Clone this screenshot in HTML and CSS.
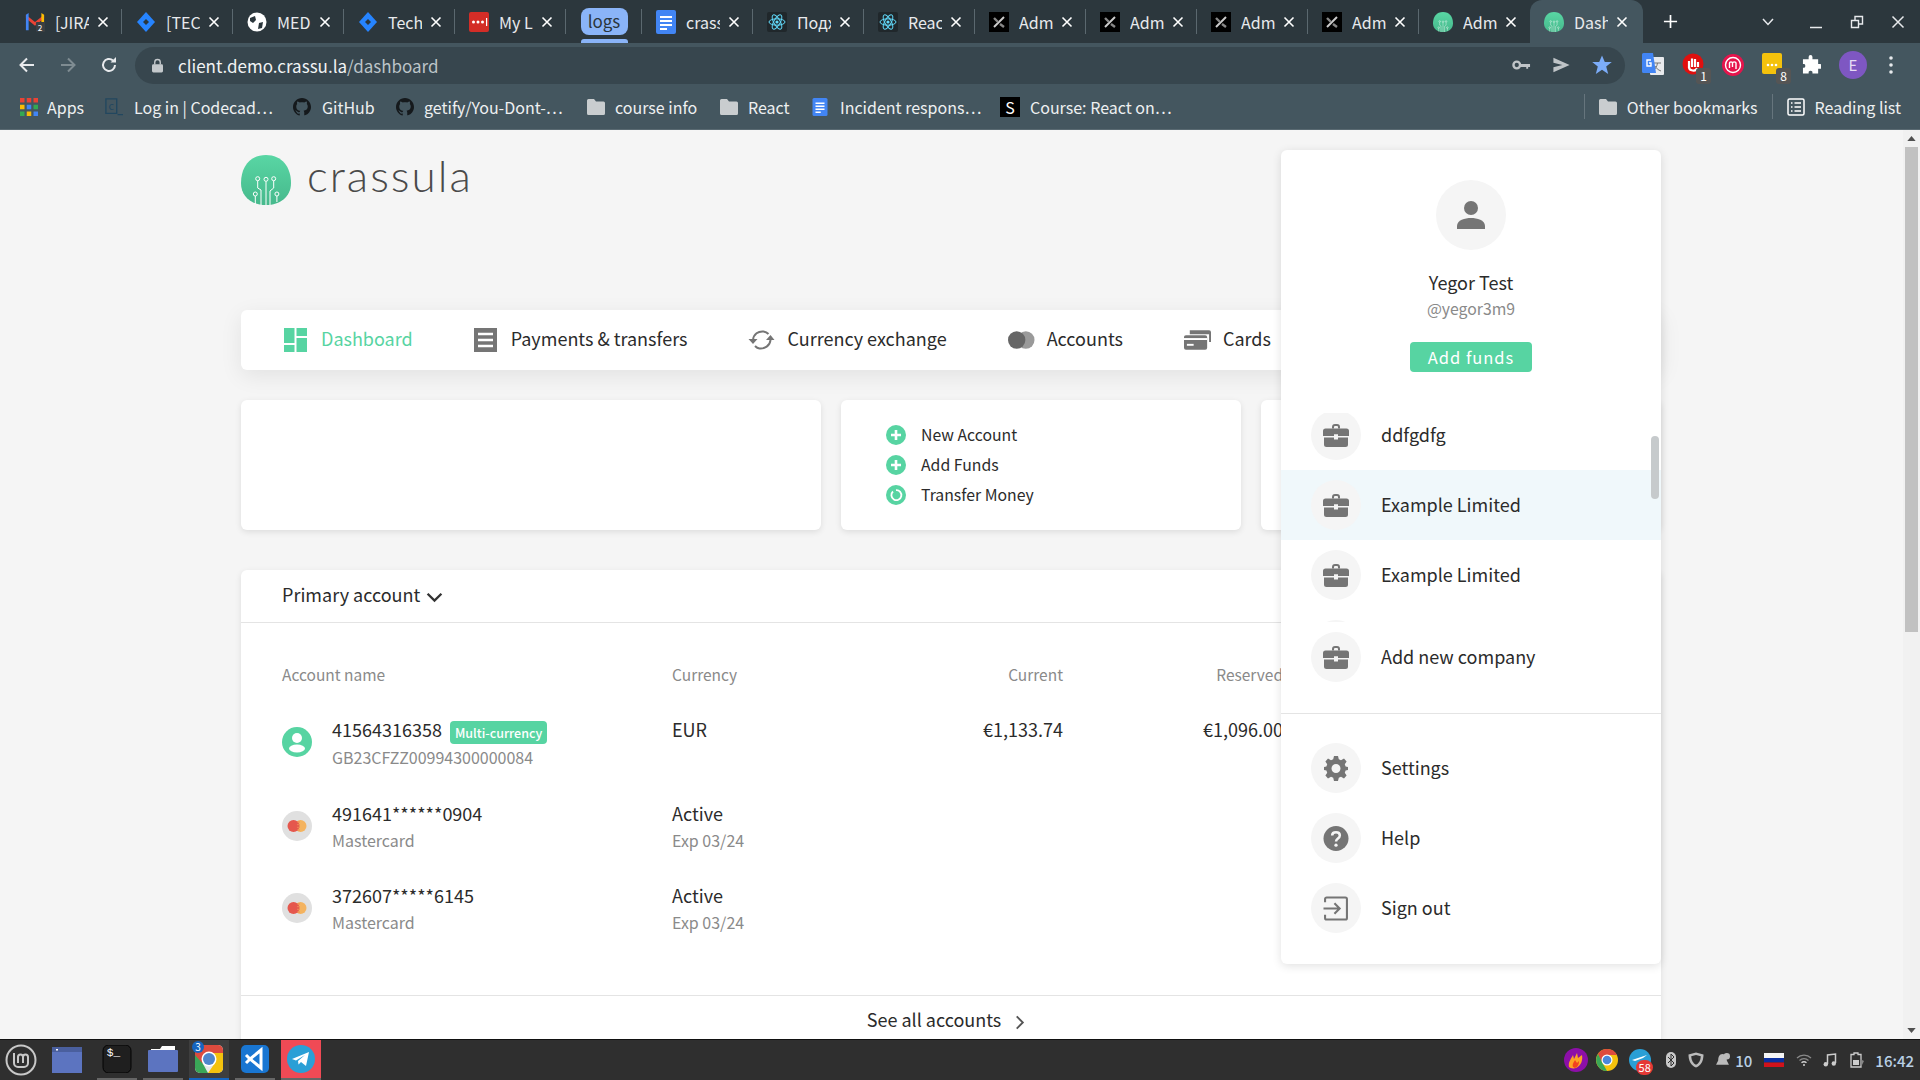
FILE: index.html
```html
<!DOCTYPE html>
<html lang="en">
<head>
  <meta charset="UTF-8">
  <title>Dashboard</title>
  <link rel="stylesheet" href="styles.css">
</head>
<body>
  <svg class="defs" width="0" height="0">
    <defs>
      <linearGradient id="leaf" x1="0" y1="0" x2="0" y2="1">
        <stop offset="0" stop-color="#59d6a4"/>
        <stop offset="1" stop-color="#46b98c"/>
      </linearGradient>
      <symbol id="i-logo" viewBox="0 0 50 50">
        <path d="M25 0C41 0 50 12 50 28C50 42 39 50 25 50C11 50 0 42 0 28C0 12 9 0 25 0Z" fill="url(#leaf)"/>
        <g fill="none" stroke="#fff" stroke-width="1">
          <circle cx="16.7" cy="23.7" r="2"/><circle cx="25" cy="24.3" r="2"/><circle cx="32.7" cy="23.7" r="2"/>
          <circle cx="14.3" cy="39" r="2"/><circle cx="35.9" cy="39" r="2"/>
          <path d="M16.7 26V33L20 35V50M25 26.5V50M32.7 26V33L29 36V50M14.3 41V49M35.9 41V47"/>
        </g>
      </symbol>
      <symbol id="i-close" viewBox="0 0 12 12">
        <path d="M1.5 1.5L10.5 10.5M10.5 1.5L1.5 10.5" stroke="#fff" stroke-width="1.6" fill="none"/>
      </symbol>
      <symbol id="i-jira" viewBox="0 0 20 20">
        <path d="M10 0L19 10L10 20L1 10Z" fill="#2684ff"/>
        <path d="M10 7L13 10L10 13L7 10Z" fill="#2b363c"/>
      </symbol>
      <symbol id="i-doc" viewBox="0 0 20 24">
        <rect width="20" height="24" rx="2" fill="#4285f4"/>
        <path d="M4 7H16M4 11H16M4 15H16M4 19H11" stroke="#fff" stroke-width="2"/>
      </symbol>
      <symbol id="i-react" viewBox="0 0 20 20">
        <rect width="20" height="20" rx="2" fill="#20272b"/>
        <g fill="none" stroke="#61dafb" stroke-width="1">
          <ellipse cx="10" cy="10" rx="8" ry="3.2"/>
          <ellipse cx="10" cy="10" rx="8" ry="3.2" transform="rotate(60 10 10)"/>
          <ellipse cx="10" cy="10" rx="8" ry="3.2" transform="rotate(120 10 10)"/>
        </g>
        <circle cx="10" cy="10" r="1.6" fill="#61dafb"/>
      </symbol>
      <symbol id="i-admin" viewBox="0 0 20 20">
        <rect width="20" height="20" fill="#000"/>
        <path d="M5 15L15 5" stroke="#ccc" stroke-width="2"/>
        <path d="M5 6L9 10M11 12L15 15" stroke="#888" stroke-width="2.4"/>
      </symbol>
      <symbol id="i-github" viewBox="0 0 16 16">
        <path fill="#15191c" d="M8 0C3.6 0 0 3.6 0 8c0 3.5 2.3 6.5 5.5 7.6.4.1.5-.2.5-.4v-1.4c-2.2.5-2.7-1.1-2.7-1.1-.4-.9-.9-1.2-.9-1.2-.7-.5.1-.5.1-.5.8.1 1.2.8 1.2.8.7 1.2 1.9.9 2.3.7.1-.5.3-.9.5-1.1-1.8-.2-3.6-.9-3.6-4 0-.9.3-1.6.8-2.1-.1-.2-.4-1 .1-2.1 0 0 .7-.2 2.2.8.6-.2 1.3-.3 2-.3s1.4.1 2 .3c1.5-1 2.2-.8 2.2-.8.4 1.1.2 1.9.1 2.1.5.6.8 1.3.8 2.1 0 3.1-1.9 3.7-3.7 3.9.3.3.6.8.6 1.5v2.2c0 .2.1.5.6.4C13.7 14.5 16 11.5 16 8c0-4.4-3.6-8-8-8z"/>
      </symbol>
      <symbol id="i-folder" viewBox="0 0 18 16">
        <path fill="#c9cdcf" d="M1.500 0H7L9 2.500H16.500A1.500 1.500 0 0 1 18 4V14.500A1.500 1.500 0 0 1 16.500 16H1.500A1.500 1.500 0 0 1 0 14.500V1.500A1.500 1.500 0 0 1 1.500 0Z"/>
      </symbol>
      <symbol id="i-brief" viewBox="0 0 26 24">
        <path fill="#757575" d="M9 3.500A3 3 0 0 1 12 .5H14A3 3 0 0 1 17 3.500V5H15V3.500A1 1 0 0 0 14 2.500H12A1 1 0 0 0 11 3.500V5H9Z"/>
        <path fill="#757575" d="M2.500 5H23.500A2.500 2.500 0 0 1 26 7.500V12.500H15V10.800H11V12.500H0V7.500A2.500 2.500 0 0 1 2.500 5Z"/>
        <path fill="#757575" d="M1 14H11V16H15V14H25V21A2.500 2.500 0 0 1 22.500 23.500H3.500A2.500 2.500 0 0 1 1 21Z"/>
      </symbol>
      <symbol id="i-card" viewBox="0 0 30 30">
        <circle cx="15" cy="15" r="15" fill="#e0e0e0"/>
        <circle cx="18.500" cy="15" r="6" fill="#f4b35f"/>
        <circle cx="11.500" cy="15" r="6" fill="#e5574d"/>
        <path d="M15 11H18M15 13.700H18M15 16.300H18M15 19H18" stroke="#ee8a55" stroke-width="1"/>
      </symbol>
      <symbol id="i-plus" viewBox="0 0 20 20">
        <circle cx="10" cy="10" r="10" fill="#57d4a2"/>
        <path d="M10 5V15M5 10H15" stroke="#fff" stroke-width="2.600"/>
      </symbol>
    </defs>
  </svg>

  <div class="tabstrip">
    <div class="tab">
      <svg class="fav" viewBox="0 0 20 22"><path fill="#ea4335" d="M0 3L10 11L20 3V7L10 15L0 7Z"/><path fill="#4285f4" d="M0 3L3 1V20H0Z"/><path fill="#fbbc04" d="M17 1L20 3V12H17Z"/><rect x="11" y="11" width="10" height="11" rx="1" fill="#3b3f42"/><text class="fav-count" x="13" y="20.500">2</text></svg>
      <span class="tab-title">[JIRA</span><svg class="tab-x"><use href="#i-close"/></svg>
    </div>
    <div class="tab"><svg class="fav"><use href="#i-jira"/></svg><span class="tab-title">[TECH</span><svg class="tab-x"><use href="#i-close"/></svg></div>
    <div class="tab">
      <svg class="fav" viewBox="0 0 20 20"><circle cx="10" cy="10" r="9.500" fill="#fff"/><path fill="#2b363c" d="M3 6L8 4L9 8L6 11L3 9ZM12 11L16 10L15 16L11 17Z"/></svg>
      <span class="tab-title">MEDIUM</span><svg class="tab-x"><use href="#i-close"/></svg>
    </div>
    <div class="tab"><svg class="fav"><use href="#i-jira"/></svg><span class="tab-title">Tech</span><svg class="tab-x"><use href="#i-close"/></svg></div>
    <div class="tab">
      <svg class="fav" viewBox="0 0 20 20"><rect width="20" height="20" rx="2" fill="#d32d27"/><circle cx="4.500" cy="10" r="1.500" fill="#fff"/><circle cx="9" cy="10" r="1.500" fill="#fff"/><circle cx="13.500" cy="10" r="1.500" fill="#fff"/><rect x="17" y="6" width="1.200" height="8" fill="#fff"/></svg>
      <span class="tab-title">My LastPass</span><svg class="tab-x"><use href="#i-close"/></svg>
    </div>
    <div class="tab-group"><span class="group-chip">logs</span><span class="group-line"></span></div>
    <div class="tab"><svg class="fav fav-doc"><use href="#i-doc"/></svg><span class="tab-title">crassula</span><svg class="tab-x"><use href="#i-close"/></svg></div>
    <div class="tab"><svg class="fav"><use href="#i-react"/></svg><span class="tab-title">Подход</span><svg class="tab-x"><use href="#i-close"/></svg></div>
    <div class="tab"><svg class="fav"><use href="#i-react"/></svg><span class="tab-title">React</span><svg class="tab-x"><use href="#i-close"/></svg></div>
    <div class="tab"><svg class="fav"><use href="#i-admin"/></svg><span class="tab-title">Admin</span><svg class="tab-x"><use href="#i-close"/></svg></div>
    <div class="tab"><svg class="fav"><use href="#i-admin"/></svg><span class="tab-title">Admin</span><svg class="tab-x"><use href="#i-close"/></svg></div>
    <div class="tab"><svg class="fav"><use href="#i-admin"/></svg><span class="tab-title">Admin</span><svg class="tab-x"><use href="#i-close"/></svg></div>
    <div class="tab"><svg class="fav"><use href="#i-admin"/></svg><span class="tab-title">Admin</span><svg class="tab-x"><use href="#i-close"/></svg></div>
    <div class="tab tab-last"><svg class="fav"><use href="#i-logo"/></svg><span class="tab-title">Admin</span><svg class="tab-x"><use href="#i-close"/></svg></div>
    <div class="tab tab-active"><svg class="fav"><use href="#i-logo"/></svg><span class="tab-title">Dashboard</span><svg class="tab-x"><use href="#i-close"/></svg></div>
    <svg class="new-tab" viewBox="0 0 16 16"><path d="M8 1V15M1 8H15" stroke="#fff" stroke-width="1.800"/></svg>
    <div class="win-controls">
      <svg class="win-chevron" viewBox="0 0 12 8"><path d="M1 1L6 6.500L11 1" stroke="#e8eaed" stroke-width="1.500" fill="none"/></svg>
      <svg class="win-btn" viewBox="0 0 14 14"><path d="M1 12.500H13" stroke="#e8eaed" stroke-width="1.500"/></svg>
      <svg class="win-btn" viewBox="0 0 14 14"><path d="M1.500 5.500H8.500V12.500H1.500ZM5 5V1.500H12.500V9H9" stroke="#e8eaed" stroke-width="1.400" fill="none"/></svg>
      <svg class="win-btn" viewBox="0 0 14 14"><path d="M1.500 1.500L12.500 12.500M12.500 1.500L1.500 12.500" stroke="#e8eaed" stroke-width="1.500"/></svg>
    </div>
  </div>

  <div class="toolbar">
    <svg class="nav-btn" viewBox="0 0 18 18"><path d="M16 9H3M9 2.500L2.500 9L9 15.500" stroke="#e8eaed" stroke-width="2" fill="none"/></svg>
    <svg class="nav-btn" viewBox="0 0 18 18"><path d="M2 9H15M9 2.500L15.500 9L9 15.500" stroke="#7f8c92" stroke-width="2" fill="none"/></svg>
    <svg class="nav-btn" viewBox="0 0 18 18"><path d="M15 9A6 6 0 1 1 13 4.500" stroke="#e8eaed" stroke-width="2" fill="none"/><path d="M10.500 6.500H16V1Z" fill="#e8eaed"/></svg>
    <div class="omnibox">
      <svg class="lock" viewBox="0 0 12 16"><path d="M3 7V4.500A3 3 0 0 1 9 4.500V7" stroke="#c4c9cc" stroke-width="1.500" fill="none"/><rect y="6.500" width="12" height="9" rx="1.500" fill="#c4c9cc"/></svg>
      <span class="url">client.demo.crassu.la<span class="url-path">/dashboard</span></span>
      <svg class="omni-key" viewBox="0 0 20 12"><circle cx="5" cy="6" r="3.500" fill="none" stroke="#bfc4c7" stroke-width="2.500"/><path d="M8 5H19V8H17V10H15V8H8Z" fill="#bfc4c7"/></svg>
      <svg class="omni-send" viewBox="0 0 20 20"><path d="M1 2L19 10L1 18L1 12.500L11 10L1 7.500Z" fill="#bfc4c7"/></svg>
      <svg class="omni-star" viewBox="0 0 20 20"><path d="M10 0.500L12.800 7H19.800L14.200 11.500L16.200 19L10 14.800L3.800 19L5.800 11.500L0.200 7H7.200Z" fill="#7cacf8"/></svg>
    </div>
    <div class="extensions">
      <svg class="ext" viewBox="0 0 22 24"><rect x="8" y="4" width="14" height="18" rx="1" fill="#e8eaed"/><path d="M12 10H19M15.500 10C15 14 13 16 11 18M13 13C14 15 16 17 19 18" stroke="#777" stroke-width="1" fill="none"/><path d="M1.500 0H11L14 20H1.500A1.500 1.500 0 0 1 0 18.500V1.500A1.500 1.500 0 0 1 1.500 0Z" fill="#4285f4"/><path d="M9 7H5V13H9V10H7" stroke="#fff" stroke-width="1.400" fill="none"/></svg>
      <div class="ext-badged">
        <svg class="ext" viewBox="0 0 22 24"><circle cx="11" cy="11" r="10.500" fill="#e0100f"/><path d="M7 15V8M10 14V5.500M13 14V6M16 14V9M7 14C7 18 14 19 15 15" stroke="#fff" stroke-width="2.200" fill="none"/></svg>
        <span class="badge">1</span>
      </div>
      <svg class="ext" viewBox="0 0 22 22"><circle cx="11" cy="11" r="11" fill="#e6144c"/><circle cx="11" cy="11" r="7.500" fill="none" stroke="#fff" stroke-width="1.400"/><path d="M7.500 14V9C7.500 7.500 10.500 7.500 10.500 9V13M10.500 9C10.500 7.500 14 7.500 14 9V15" stroke="#fff" stroke-width="1.400" fill="none"/></svg>
      <div class="ext-badged">
        <svg class="ext" viewBox="0 0 22 24"><rect width="20" height="21" rx="2" fill="#f5c20c"/><circle cx="6" cy="12" r="1.300" fill="#fff"/><circle cx="10" cy="12" r="1.300" fill="#fff"/><circle cx="14" cy="12" r="1.300" fill="#fff"/></svg>
        <span class="badge">8</span>
      </div>
      <svg class="ext ext-puzzle" viewBox="0 0 20 20"><path fill="#fff" d="M7 1.500A2 2 0 0 1 11 1.500V4H17V9H19A2.500 2.500 0 0 1 19 14H17V19H11V17A2.500 2.500 0 0 0 7 17V19H1V13H2.500A2.500 2.500 0 0 0 2.500 9H1V4H7Z"/></svg>
      <span class="profile">E</span>
      <svg class="ext-dots" viewBox="0 0 4 18"><circle cx="2" cy="2" r="1.800" fill="#e8eaed"/><circle cx="2" cy="9" r="1.800" fill="#e8eaed"/><circle cx="2" cy="16" r="1.800" fill="#e8eaed"/></svg>
    </div>
  </div>

  <div class="bookmarks">
    <a class="bm bm-apps">
      <svg class="bm-ic" viewBox="0 0 16 16"><g>
        <rect width="4" height="4" fill="#ea4335"/><rect x="6" width="4" height="4" fill="#ea4335"/><rect x="12" width="4" height="4" fill="#ea4335"/>
        <rect y="6" width="4" height="4" fill="#fbbc04"/><rect x="6" y="6" width="4" height="4" fill="#4285f4"/><rect x="12" y="6" width="4" height="4" fill="#34a853"/>
        <rect y="12" width="4" height="4" fill="#34a853"/><rect x="6" y="12" width="4" height="4" fill="#fbbc04"/><rect x="12" y="12" width="4" height="4" fill="#4285f4"/></g></svg>
      Apps</a>
    <a class="bm bm-code">
      <svg class="bm-ic" viewBox="0 0 20 20"><path d="M1 1H13V17H1ZM14 18.500H20" fill="none" stroke="#22475f" stroke-width="1.500"/><text class="bm-c" x="4" y="13">c</text></svg>
      Log in | Codecad…</a>
    <a class="bm bm-git"><svg class="bm-ic"><use href="#i-github"/></svg>GitHub</a>
    <a class="bm bm-getify"><svg class="bm-ic"><use href="#i-github"/></svg>getify/You-Dont-…</a>
    <a class="bm bm-course"><svg class="bm-ic"><use href="#i-folder"/></svg>course info</a>
    <a class="bm bm-react"><svg class="bm-ic"><use href="#i-folder"/></svg>React</a>
    <a class="bm bm-incident"><svg class="bm-ic"><use href="#i-doc"/></svg>Incident respons…</a>
    <a class="bm bm-s"><span class="bm-sico">S</span>Course: React on…</a>
    <div class="bm-right">
      <a class="bm bm-other"><svg class="bm-ic"><use href="#i-folder"/></svg>Other bookmarks</a>
      <a class="bm bm-reading">
        <svg class="bm-ic" viewBox="0 0 18 18"><rect x="1" y="1" width="16" height="16" rx="1.500" fill="none" stroke="#fff" stroke-width="1.500"/><path d="M4 5H5.500M7.500 5H14M4 9H5.500M7.500 9H14M4 13H5.500M7.500 13H14" stroke="#fff" stroke-width="1.500"/></svg>
        Reading list</a>
    </div>
  </div>

  <div class="viewport">
    <div class="page">
      <div class="brand">
        <svg class="brand-mark"><use href="#i-logo"/></svg>
        <span class="brand-name">crassula</span>
      </div>

      <nav class="mainnav card">
        <a class="nav-item nav-item-active">
          <svg class="nav-ic" viewBox="0 0 24 24"><path fill="#57d4a2" d="M0 0H10.500V15H0ZM12.500 0H23V8H12.500ZM0 17H10.500V24H0ZM12.500 10H23V24H12.500Z"/></svg>
          <span class="nav-label">Dashboard</span></a>
        <a class="nav-item">
          <svg class="nav-ic" viewBox="0 0 24 24"><rect width="23" height="24" fill="#757575"/><path d="M4 6H19M4 12H19M4 18H19" stroke="#fff" stroke-width="2.600"/></svg>
          <span class="nav-label">Payments &amp; transfers</span></a>
        <a class="nav-item nav-item-wide">
          <svg class="nav-ic nav-ic-wide" viewBox="0 0 26 24"><g fill="none" stroke="#757575" stroke-width="2"><path d="M4.500 12C5 6 10 3 15 3.500C17 3.800 19 5 20 6"/><path d="M22 12C21.500 18 16 21 11 20.500C9 20.200 7.500 19 6.500 18"/></g><path fill="#757575" d="M0 11H9L4.500 16ZM17.500 12H26L22 7Z"/></svg>
          <span class="nav-label">Currency exchange</span></a>
        <a class="nav-item nav-item-wide">
          <svg class="nav-ic nav-ic-wide" viewBox="0 0 28 20"><circle cx="18.500" cy="10" r="9" fill="#9a9a9a"/><circle cx="9" cy="10" r="9" fill="#666"/></svg>
          <span class="nav-label">Accounts</span></a>
        <a class="nav-item nav-item-wide">
          <svg class="nav-ic nav-ic-wide" viewBox="0 0 28 20"><path fill="#757575" d="M6 0H26A2 2 0 0 1 28 2V12H26V4H6Z"/><rect y="5" width="24" height="15" rx="2" fill="#757575"/><path d="M0 9H24" stroke="#fff" stroke-width="2"/><path d="M3 15H10" stroke="#fff" stroke-width="2"/></svg>
          <span class="nav-label">Cards</span></a>
      </nav>

      <div class="widgets">
        <div class="widget widget-wide card"></div>
        <div class="widget widget-mid card">
          <a class="quick"><svg class="quick-ic"><use href="#i-plus"/></svg>New Account</a>
          <a class="quick"><svg class="quick-ic"><use href="#i-plus"/></svg>Add Funds</a>
          <a class="quick">
            <svg class="quick-ic" viewBox="0 0 20 20"><circle cx="10" cy="10" r="10" fill="#57d4a2"/><path d="M7 6.500A5 5 0 1 0 10 5.200" fill="none" stroke="#fff" stroke-width="1.800"/></svg>
            Transfer Money</a>
        </div>
        <div class="widget widget-rest card"></div>
      </div>

      <section class="accounts card">
        <header class="accounts-head">
          <span class="head-label">Primary account</span>
          <svg class="head-chevron" viewBox="0 0 16 10"><path d="M1.500 1.500L8 8L14.500 1.500" stroke="#333" stroke-width="2.200" fill="none"/></svg>
        </header>
        <div class="acc-table">
          <div class="acc-row acc-labels">
            <span>Account name</span><span>Currency</span><span class="num">Current</span><span class="num">Reserved</span>
          </div>
          <div class="acc-row acc-first">
            <div class="acc-name">
              <svg class="acc-ic" viewBox="0 0 30 30"><circle cx="15" cy="15" r="15" fill="#57d4a2"/><circle cx="15" cy="11" r="5" fill="#fff"/><ellipse cx="15" cy="21.500" rx="8" ry="4" fill="#fff"/></svg>
              <div class="acc-text">
                <div class="acc-title">41564316358<span class="tag">Multi-currency</span></div>
                <div class="acc-sub">GB23CFZZ00994300000084</div>
              </div>
            </div>
            <div class="acc-title acc-text">EUR</div>
            <div class="acc-title acc-text num">€1,133.74</div>
            <div class="acc-title acc-text num">€1,096.00</div>
          </div>
          <div class="acc-row">
            <div class="acc-name">
              <svg class="acc-ic"><use href="#i-card"/></svg>
              <div class="acc-text"><div class="acc-title">491641******0904</div><div class="acc-sub">Mastercard</div></div>
            </div>
            <div class="acc-text"><div class="acc-title">Active</div><div class="acc-sub">Exp 03/24</div></div>
          </div>
          <div class="acc-row">
            <div class="acc-name">
              <svg class="acc-ic"><use href="#i-card"/></svg>
              <div class="acc-text"><div class="acc-title">372607*****6145</div><div class="acc-sub">Mastercard</div></div>
            </div>
            <div class="acc-text"><div class="acc-title">Active</div><div class="acc-sub">Exp 03/24</div></div>
          </div>
        </div>
        <footer class="accounts-foot">
          <span class="foot-label">See all accounts</span>
          <svg class="foot-chevron" viewBox="0 0 10 16"><path d="M1.500 1.500L8 8L1.500 14.500" stroke="#555" stroke-width="2" fill="none"/></svg>
        </footer>
      </section>
    </div>

    <aside class="profile-menu">
      <div class="pm-top">
        <span class="pm-avatar">
          <svg class="pm-avatar-ic" viewBox="0 0 28 28"><circle cx="14" cy="7" r="7" fill="#757575"/><path d="M0 28V25C0 19 8 17 14 17S28 19 28 25V28Z" fill="#757575"/></svg>
        </span>
        <div class="pm-name">Yegor Test</div>
        <div class="pm-handle">@yegor3m9</div>
        <button class="pm-add">Add funds</button>
      </div>
      <div class="pm-companies">
        <div class="pm-scroll">
          <a class="pm-row"><span class="pm-circle"><svg class="pm-ic"><use href="#i-brief"/></svg></span><span class="pm-label">ddfgdfg</span></a>
          <a class="pm-row pm-row-on"><span class="pm-circle"><svg class="pm-ic"><use href="#i-brief"/></svg></span><span class="pm-label">Example Limited</span></a>
          <a class="pm-row"><span class="pm-circle"><svg class="pm-ic"><use href="#i-brief"/></svg></span><span class="pm-label">Example Limited</span></a>
          <a class="pm-row"><span class="pm-circle"></span></a>
        </div>
        <span class="pm-thumb"></span>
      </div>
      <a class="pm-row"><span class="pm-circle"><svg class="pm-ic"><use href="#i-brief"/></svg></span><span class="pm-label">Add new company</span></a>
      <div class="pm-links">
        <a class="pm-row"><span class="pm-circle">
          <svg class="pm-ic" viewBox="0 0 24 25"><path fill="#757575" fill-rule="evenodd" d="M10 0H14L14.800 3.300L17 4.300L20 2.600L22.600 5.500L20.800 8.300L21.600 10.500L24 11V14L21.600 14.500L20.800 16.700L22.600 19.500L20 22.400L17 20.700L14.800 21.700L14 25H10L9.200 21.700L7 20.700L4 22.400L1.400 19.500L3.200 16.700L2.400 14.500L0 14V11L2.400 10.500L3.200 8.300L1.400 5.500L4 2.600L7 4.300L9.200 3.300ZM12 8A4.500 4.500 0 1 0 12 17A4.500 4.500 0 1 0 12 8Z"/></svg>
        </span><span class="pm-label">Settings</span></a>
        <a class="pm-row"><span class="pm-circle">
          <svg class="pm-ic" viewBox="0 0 26 26"><circle cx="13" cy="13" r="13" fill="#757575"/><path d="M9 10C9 5.500 17 5.500 17 10C17 13 13 13 13 16" fill="none" stroke="#f5f5f5" stroke-width="2.600"/><circle cx="13" cy="20" r="1.700" fill="#f5f5f5"/></svg>
        </span><span class="pm-label">Help</span></a>
        <a class="pm-row"><span class="pm-circle">
          <svg class="pm-ic" viewBox="0 0 24 24"><path d="M1.500 6V3A1.500 1.500 0 0 1 3 1.500H21A1.500 1.500 0 0 1 22.500 3V21A1.500 1.500 0 0 1 21 22.500H3A1.500 1.500 0 0 1 1.500 21V18" fill="none" stroke="#757575" stroke-width="2"/><path d="M0 12H15M10.500 7L15.500 12L10.500 17" fill="none" stroke="#757575" stroke-width="2"/></svg>
        </span><span class="pm-label">Sign out</span></a>
      </div>
    </aside>

    <div class="page-scroll">
      <svg class="scroll-arrow" viewBox="0 0 10 6"><path d="M5 0L10 6H0Z" fill="#505050"/></svg>
      <span class="scroll-thumb"></span>
      <svg class="scroll-arrow" viewBox="0 0 10 6"><path d="M5 6L10 0H0Z" fill="#505050"/></svg>
    </div>
  </div>

  <div class="taskbar">
    <svg class="mint" viewBox="0 0 32 32"><circle cx="16" cy="16" r="14.500" fill="none" stroke="#c8c8c8" stroke-width="2"/><path d="M9 9V19A4 4 0 0 0 13 23H19A4 4 0 0 0 23 19V13A2.500 2.500 0 0 0 18 13V19M13 19V13A2.500 2.500 0 0 1 18 13" fill="none" stroke="#c8c8c8" stroke-width="2"/></svg>
    <span class="tb-plain"><svg class="tb-ic" viewBox="0 0 30 26"><rect width="30" height="26" fill="#5c74c0"/><rect width="30" height="5" fill="#4a5f9e"/><rect x="4" y="2" width="2" height="1.500" fill="#fff"/></svg></span>
    <div class="tb-apps">
      <span class="tb-app"><svg class="tb-ic" viewBox="0 0 30 30"><rect width="30" height="30" rx="6" fill="#1f1f1f" stroke="#000"/><text class="tb-term" x="4" y="12">$_</text></svg></span>
      <span class="tb-app"><svg class="tb-ic" viewBox="0 0 30 26"><path fill="#fff" d="M3 3H12L14 0H27V6H3Z"/><rect y="4" width="30" height="22" rx="1" fill="#5c74c0"/></svg></span>
      <span class="tb-app tb-app-on">
        <svg class="tb-ic" viewBox="0 0 28 28"><rect width="28" height="28" rx="5" fill="#e8e8e8"/><path d="M0 5A5 5 0 0 1 5 0H23A5 5 0 0 1 28 5V8H14L7 19L0 11Z" fill="#dd4b3e"/><path d="M0 10L8 19L13 28H5A5 5 0 0 1 0 23Z" fill="#3aa757"/><path d="M28 8V23A5 5 0 0 1 23 28H13L20 18L14 8Z" fill="#f4c20d"/><circle cx="14" cy="14" r="7.500" fill="#fff"/><circle cx="14" cy="14" r="6" fill="#4f86cc"/></svg>
        <span class="tb-count">3</span>
      </span>
      <span class="tb-app"><svg class="tb-ic" viewBox="0 0 28 28"><rect width="28" height="28" rx="5" fill="#1976d2"/><path d="M20 5V23L9 14ZM5 10L9 14L5 18" fill="none" stroke="#fff" stroke-width="3"/></svg></span>
      <span class="tb-app tb-app-alert"><svg class="tb-ic" viewBox="0 0 28 28"><circle cx="14" cy="14" r="14" fill="#2a9fd6"/><path d="M5 14L22 7L19 21L14 17L11.500 19.500L11 16L18 10L9 15.500Z" fill="#fff"/></svg></span>
    </div>
    <div class="tray">
      <svg class="tray-flame" viewBox="0 0 24 24"><circle cx="12" cy="12" r="12" fill="#8c0fa8"/><path d="M5 19C4 14 7 11 9 7L10 11L13 5L14 10L18 7C19 12 17 18 12 20C9 21 6 20 5 19Z" fill="#fda425"/><path d="M9 19C8 16 10 14 11 12L13 15L15 13C15 16 14 19 11 20Z" fill="#f3431f"/></svg>
      <svg class="tray-chrome" viewBox="0 0 22 22"><circle cx="11" cy="11" r="11" fill="#f4c20d"/><path d="M11 0A11 11 0 0 1 21 6H11L5 13L2 5A11 11 0 0 1 11 0Z" fill="#dd4b3e"/><path d="M2 5L7 15L11 22A11 11 0 0 1 2 5Z" fill="#3aa757"/><circle cx="11" cy="11" r="5.500" fill="#fff"/><circle cx="11" cy="11" r="4.300" fill="#4a88dc"/></svg>
      <span class="tray-tg">
        <svg class="tray-chrome" viewBox="0 0 22 22"><circle cx="11" cy="11" r="11" fill="#2a9fd6"/><path d="M3 11L18 6L14 9L6 12Z" fill="#fff"/></svg>
        <span class="tray-count">58</span>
      </span>
      <svg class="tray-bt" viewBox="0 0 10 16"><rect width="10" height="16" rx="5" fill="#c8c8c8"/><path d="M2 5L8 11L5 14V2L8 5L2 11" fill="none" stroke="#2f2f2f" stroke-width="1"/></svg>
      <svg class="tray-shield" viewBox="0 0 16 16"><path d="M8 0.500L15.500 2.500C15.500 9 13 13.500 8 15.500C3 13.500 0.500 9 0.500 2.500Z" fill="#bbb"/><path d="M8 3L12.800 4.300C12.500 8.500 11 11.300 8 12.800Z" fill="#2f2f2f"/><path d="M8 3L3.200 4.300C3.500 8.500 5 11.300 8 12.800Z" fill="#2f2f2f"/></svg>
      <span class="tray-note">
        <svg class="tray-bell" viewBox="0 0 14 14"><path d="M7 1C10 1 11 4 11 7L13 11H1L3 7C3 4 4 1 7 1Z" fill="#bbb"/><circle cx="11" cy="3" r="3" fill="#bbb"/></svg>
        10
      </span>
      <svg class="tray-flag" viewBox="0 0 20 14"><rect width="20" height="5" fill="#f5f5f5"/><rect y="5" width="20" height="4.500" fill="#0b2fa0"/><rect y="9.500" width="20" height="4.500" fill="#d0121b"/></svg>
      <svg class="tray-wifi" viewBox="0 0 16 12"><path d="M1 4A10 10 0 0 1 15 4M3.500 6.500A6.500 6.500 0 0 1 12.500 6.500" fill="none" stroke="#8a8a8a" stroke-width="1.300"/><path d="M5.500 8.800A3.500 3.500 0 0 1 10.500 8.800" fill="none" stroke="#d0d0d0" stroke-width="1.300"/><circle cx="8" cy="11" r="1" fill="#d0d0d0"/></svg>
      <svg class="tray-music" viewBox="0 0 14 14"><path d="M4.500 11V2L12.500 1V10" fill="none" stroke="#ccc" stroke-width="1.500"/><circle cx="2.800" cy="11.300" r="2.200" fill="#ccc"/><circle cx="10.800" cy="10.500" r="2.200" fill="#ccc"/></svg>
      <svg class="tray-batt" viewBox="0 0 14 16"><path d="M4 2.500V1H8V2.500H11V15H1V2.500Z" fill="none" stroke="#ccc" stroke-width="1.300"/><path d="M3 8H9V13H3Z" fill="#ccc"/><path d="M10 7L14 9L11 15Z" fill="#888"/></svg>
      <span class="tray-clock">16:42</span>
    </div>
  </div>
</body>
</html>
```

FILE: styles.css
```css
* {
  box-sizing: border-box;
}
html, body {
  height: 100%;
}
body {
  margin: 0;
  display: flex;
  flex-direction: column;
  height: 1080px;
  overflow: hidden;
  font-family: "Noto Sans CJK SC", "Noto Sans", sans-serif;
  color: #2b2b2b;
  background: #f5f5f5;
}
a {
  color: inherit;
  text-decoration: none;
}
.defs {
  position: absolute;
}

/* browser tabs */
.tabstrip {
  height: 43px;
  flex: none;
  display: flex;
  padding-left: 11px;
  background: #2c373d;
  color: #e8eaed;
}
.tab {
  position: relative;
  width: 111px;
  display: flex;
  align-items: center;
  padding-left: 14px;
}
.tab::after {
  content: "";
  position: absolute;
  right: 0;
  top: 9px;
  height: 25px;
  width: 1px;
  background: #5b686f;
}
.tab-last::after, .tab-active::after {
  display: none;
}
.tab-active {
  width: 113px;
  background: #44565f;
  border-radius: 12px 12px 0 0;
}
.fav {
  width: 20px;
  height: 20px;
  flex: none;
}
.fav-doc {
  height: 24px;
}
.fav-count {
  font-size: 9px;
  fill: #fff;
}
.tab-title {
  width: 34px;
  margin-left: 10px;
  overflow: hidden;
  white-space: nowrap;
  font-size: 16px;
  line-height: 22px;
}
.tab-x {
  width: 12px;
  height: 12px;
  margin-left: 8px;
  flex: none;
}
.tab-group {
  position: relative;
  width: 76px;
  display: flex;
  flex-direction: column;
  align-items: center;
  padding-top: 8px;
}
.tab-group::after {
  content: "";
  position: absolute;
  right: 0;
  top: 9px;
  height: 25px;
  width: 1px;
  background: #5b686f;
}
.group-chip {
  width: 47px;
  height: 27px;
  border-radius: 8px;
  background: #8ab4f8;
  color: #2b363c;
  font-size: 17px;
  line-height: 26px;
  text-align: center;
}
.group-line {
  width: 47px;
  height: 4px;
  margin-top: 4px;
  background: #8ab4f8;
  border-radius: 3px 3px 0 0;
}
.new-tab {
  width: 15px;
  height: 15px;
  margin: 14px 0 0 20px;
}
.win-controls {
  margin-left: auto;
  display: flex;
  align-items: center;
  gap: 27px;
  padding-right: 15px;
}
.win-chevron {
  width: 12px;
  height: 8px;
  margin-right: 8px;
}
.win-btn {
  width: 14px;
  height: 14px;
}

/* toolbar */
.toolbar {
  height: 44px;
  flex: none;
  display: flex;
  align-items: center;
  padding-left: 18px;
  background: #44565f;
}
.nav-btn {
  width: 18px;
  height: 18px;
  margin-right: 23px;
}
.omnibox {
  width: 1490px;
  height: 37px;
  margin-left: -6px;
  display: flex;
  align-items: center;
  padding: 0 13px 0 17px;
  border-radius: 19px;
  background: #37464e;
}
.lock {
  width: 11px;
  height: 15px;
}
.url {
  margin-left: 15px;
  font-size: 17px;
  color: #f1f3f4;
}
.url-path {
  color: #bcc4c8;
}
.omni-key {
  width: 19px;
  height: 12px;
  margin-left: auto;
}
.omni-send {
  width: 19px;
  height: 18px;
  margin-left: 21px;
}
.omni-star {
  width: 20px;
  height: 20px;
  margin-left: 21px;
}
.extensions {
  display: flex;
  align-items: center;
  gap: 18px;
  margin-left: 17px;
}
.ext {
  width: 22px;
  height: 24px;
  display: block;
}
.ext-puzzle {
  width: 19px;
  height: 20px;
}
.ext-badged {
  position: relative;
  height: 24px;
}
.badge {
  position: absolute;
  right: -7px;
  bottom: -7px;
  width: 15px;
  height: 16px;
  border-radius: 3px;
  background: #555;
  color: #fff;
  font-size: 12px;
  line-height: 16px;
  text-align: center;
}
.profile {
  width: 28px;
  height: 28px;
  border-radius: 50%;
  background: #7e57c2;
  color: #e6dcf5;
  font-size: 15px;
  line-height: 28px;
  text-align: center;
}
.ext-dots {
  width: 4px;
  height: 18px;
  margin-left: 4px;
}

/* bookmarks */
.bookmarks {
  height: 43px;
  flex: none;
  display: flex;
  align-items: center;
  padding: 0 0 3px 20px;
  background: #44565f;
  color: #eef0f1;
  font-size: 16px;
  white-space: nowrap;
  border-bottom: 1px solid #5a6a72;
}
.bm {
  display: flex;
  align-items: center;
  gap: 10px;
}
.bm-ic {
  width: 18px;
  height: 18px;
  flex: none;
}
.bm-apps {
  width: 85px;
  gap: 9px;
}
.bm-code {
  width: 188px;
  gap: 11px;
}
.bm-git {
  width: 103px;
  gap: 11px;
}
.bm-getify {
  width: 191px;
}
.bm-course {
  width: 133px;
}
.bm-react {
  width: 91px;
}
.bm-incident {
  width: 189px;
  gap: 11px;
}
.bm-c {
  font-size: 12px;
  fill: #22475f;
}
.bm-sico {
  width: 20px;
  height: 20px;
  background: #000;
  color: #fff;
  font-size: 16px;
  line-height: 20px;
  text-align: center;
}
.bm-right {
  margin-left: auto;
  display: flex;
  align-items: center;
  padding-right: 19px;
}
.bm-other, .bm-reading {
  height: 25px;
  padding-left: 14px;
  border-left: 1px solid #66757d;
}
.bm-other {
  padding-right: 14px;
}

/* page area */
.viewport {
  position: relative;
  flex: 1;
  overflow: hidden;
  background: #f5f5f5;
}
.page {
  width: 1420px;
  margin-left: 241px;
  padding-top: 25px;
}
.card {
  background: #fff;
  border-radius: 6px;
  box-shadow: 0 2px 6px rgba(0,0,0,0.1);
}
.brand {
  height: 50px;
  display: flex;
  align-items: center;
  gap: 16px;
}
.brand-mark {
  width: 50px;
  height: 50px;
}
.brand-name {
  font-family: Lato, sans-serif;
  font-weight: 300;
  font-size: 44px;
  letter-spacing: 2px;
  color: #4a4a4a;
  line-height: 50px;
  margin-top: -10px;
}
.mainnav {
  height: 60px;
  margin-top: 105px;
  display: flex;
  align-items: center;
  gap: 61px;
  padding-left: 43px;
  font-size: 18px;
  box-shadow: 0 6px 22px rgba(0,0,0,0.08);
}
.nav-item {
  display: flex;
  align-items: center;
  gap: 13px;
}
.nav-item-wide {
  gap: 12px;
}
.nav-label {
  margin-top: -5px;
}
.nav-item-active {
  color: #57d4a2;
}
.nav-ic {
  width: 24px;
  height: 24px;
}
.nav-ic-wide {
  width: 27px;
  height: 24px;
}
.widgets {
  height: 130px;
  margin-top: 30px;
  display: flex;
  gap: 20px;
}
.widget-wide {
  width: 580px;
}
.widget-mid {
  width: 400px;
  display: flex;
  flex-direction: column;
  justify-content: center;
  padding-left: 45px;
}
.widget-rest {
  flex: 1;
}
.quick {
  height: 30px;
  display: flex;
  align-items: center;
  gap: 15px;
  padding-bottom: 2px;
  font-size: 15.8px;
}
.quick-ic {
  width: 20px;
  height: 20px;
  margin-top: 2px;
}
.accounts {
  margin-top: 40px;
  height: 520px;
}
.accounts-head {
  height: 53px;
  display: flex;
  align-items: center;
  gap: 6px;
  padding-left: 41px;
  border-bottom: 1px solid #e4e4e4;
  font-size: 18px;
}
.head-label {
  margin-top: -4px;
}
.head-chevron {
  width: 17px;
  height: 11px;
  margin-top: 2px;
}
.acc-table {
  height: 372px;
  padding: 36px 0 0 41px;
}
.acc-row {
  display: grid;
  grid-template-columns: 390px 220px 171px 220px;
  height: 82px;
}
.acc-labels {
  height: 53px;
  font-size: 15.5px;
  line-height: 30px;
  color: #8a8a8a;
}
.acc-first {
  height: 84px;
}
.num {
  text-align: right;
}
.acc-name {
  display: flex;
  gap: 20px;
}
.acc-ic {
  width: 30px;
  height: 30px;
  flex: none;
  margin-top: 15px;
}
.acc-text {
  padding-top: 3px;
}
.acc-title {
  font-size: 18px;
  line-height: 28px;
  color: #2b2b2b;
}
.acc-sub {
  font-size: 16px;
  line-height: 26px;
  color: #8a8a8a;
}
.tag {
  display: inline-block;
  height: 23px;
  margin-left: 8px;
  padding: 0 5px;
  border-radius: 4px;
  background: #57d4a2;
  color: #fff;
  font-size: 12.5px;
  font-weight: 500;
  line-height: 23px;
  vertical-align: -1px;
}
.accounts-foot {
  height: 56px;
  display: flex;
  align-items: center;
  justify-content: center;
  gap: 14px;
  padding-right: 10px;
  border-top: 1px solid #e4e4e4;
  font-size: 18px;
}
.foot-label {
  margin-top: -9px;
}
.foot-chevron {
  width: 10px;
  height: 15px;
  margin-top: -3px;
}

/* profile dropdown, lies over the page */
.profile-menu {
  position: absolute;
  left: 1281px;
  top: 20px;
  width: 380px;
  background: #fff;
  border-radius: 6px;
  box-shadow: 0 2px 10px rgba(0,0,0,0.12);
  font-size: 18px;
}
.pm-top {
  height: 263px;
  display: flex;
  flex-direction: column;
  align-items: center;
  padding-top: 30px;
}
.pm-avatar {
  width: 70px;
  height: 70px;
  border-radius: 50%;
  background: #f5f5f5;
  display: flex;
  align-items: center;
  justify-content: center;
}
.pm-avatar-ic {
  width: 28px;
  height: 28px;
}
.pm-name {
  margin-top: 18px;
  line-height: 28px;
}
.pm-handle {
  margin-top: 0;
  font-size: 15.8px;
  line-height: 26px;
  color: #8a8a8a;
}
.pm-add {
  width: 122px;
  height: 30px;
  margin-top: 20px;
  padding: 0;
  border: 0;
  border-radius: 4px;
  background: #57d4a2;
  color: #fff;
  font-family: inherit;
  font-size: 16.5px;
  letter-spacing: 1px;
}
.pm-companies {
  position: relative;
  height: 209px;
  overflow: hidden;
}
.pm-scroll {
  margin-top: -13px;
}
.pm-row {
  height: 70px;
  display: flex;
  align-items: center;
  gap: 20px;
  padding-left: 30px;
}
.pm-row-on {
  background: #f0f8fb;
}
.pm-circle {
  width: 50px;
  height: 50px;
  flex: none;
  border-radius: 50%;
  background: #f5f5f5;
  display: flex;
  align-items: center;
  justify-content: center;
}
.pm-label {
  margin-top: -2px;
}
.pm-ic {
  width: 26px;
  height: 25px;
}
.pm-thumb {
  position: absolute;
  right: 2px;
  top: 23px;
  width: 8px;
  height: 63px;
  border-radius: 4px;
  background: #c6cacc;
}
.pm-links {
  margin-top: 21px;
  padding: 19px 0 21px;
  border-top: 1px solid #e4e4e4;
}

/* page scrollbar */
.page-scroll {
  position: absolute;
  right: 0;
  top: 0;
  bottom: 0;
  width: 17px;
  background: #f1f1f1;
  display: flex;
  flex-direction: column;
  align-items: center;
}
.scroll-arrow {
  width: 9px;
  height: 5px;
  margin: 6px 0;
  flex: none;
}
.scroll-thumb {
  width: 13px;
  height: 485px;
  background: #c1c1c1;
  margin-bottom: auto;
}

/* desktop taskbar */
.taskbar {
  height: 41px;
  flex: none;
  display: flex;
  align-items: center;
  background: #2f2f2f;
  border-top: 1px solid #111;
}
.mint {
  width: 32px;
  height: 32px;
  margin-left: 5px;
}
.tb-plain {
  display: flex;
  margin-left: 15px;
}
.tb-ic {
  width: 30px;
  height: 28px;
  display: block;
}
.tb-apps {
  display: flex;
  gap: 6px;
  margin-left: 15px;
  align-self: stretch;
}
.tb-app {
  position: relative;
  width: 40px;
  display: flex;
  align-items: center;
  justify-content: center;
  border-bottom: 2px solid #666;
}
.tb-app-on {
  background: #3e3e3e;
  border-bottom-color: #1565c0;
}
.tb-app-alert {
  background: #f04a55;
}
.tb-term {
  font-family: "Liberation Mono", monospace;
  font-size: 12px;
  fill: #fff;
}
.tb-count {
  position: absolute;
  left: 3px;
  top: 1px;
  width: 12px;
  height: 12px;
  border-radius: 50%;
  background: #1565c0;
  color: #fff;
  font-size: 10px;
  line-height: 12px;
  text-align: center;
}
.tray {
  margin-left: auto;
  display: flex;
  align-items: center;
  padding-right: 6px;
  color: #b9d0e6;
}
.tray svg {
  display: block;
}
.tray-flame {
  width: 24px;
  height: 24px;
}
.tray-chrome {
  width: 22px;
  height: 22px;
}
.tray > .tray-chrome {
  margin-left: 8px;
}
.tray-tg {
  position: relative;
  margin-left: 11px;
}
.tray-count {
  position: absolute;
  right: -2px;
  bottom: -4px;
  width: 17px;
  height: 15px;
  border-radius: 8px;
  background: #e53935;
  color: #fff;
  font-size: 11px;
  line-height: 15px;
  text-align: center;
}
.tray-bt {
  width: 10px;
  height: 16px;
  margin-left: 15px;
}
.tray-shield {
  width: 16px;
  height: 16px;
  margin-left: 12px;
}
.tray-note {
  display: flex;
  align-items: center;
  gap: 5px;
  margin-left: 11px;
  font-size: 15px;
  font-weight: 500;
}
.tray-bell {
  width: 15px;
  height: 15px;
}
.tray-flag {
  width: 20px;
  height: 14px;
  margin-left: 12px;
}
.tray-wifi {
  width: 16px;
  height: 12px;
  margin-left: 12px;
}
.tray-music {
  width: 14px;
  height: 14px;
  margin-left: 11px;
}
.tray-batt {
  width: 14px;
  height: 16px;
  margin-left: 13px;
}
.tray-clock {
  margin-left: 11px;
  font-size: 15px;
  font-weight: 500;
}
```
